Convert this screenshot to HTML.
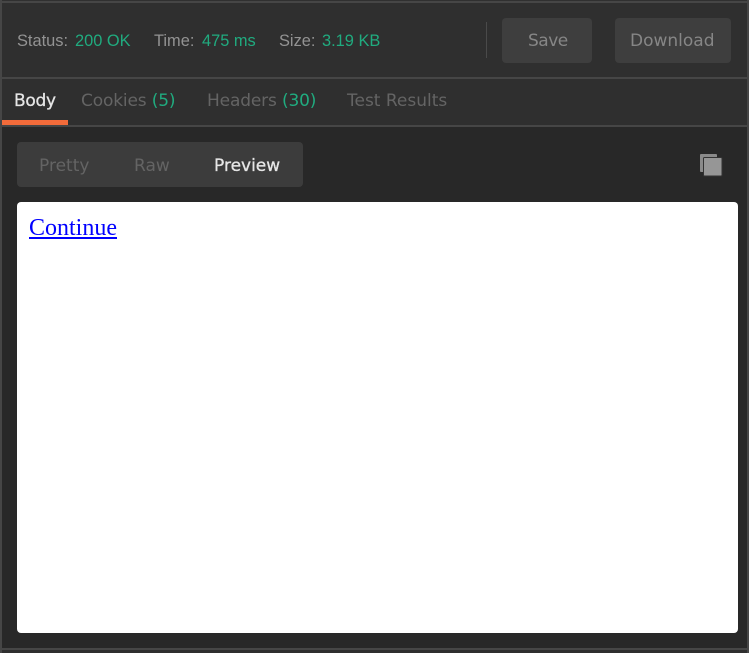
<!DOCTYPE html>
<html>
<head>
<meta charset="utf-8">
<style>
html,body{margin:0;padding:0;width:749px;height:653px;overflow:hidden;background:#282828}
.a{position:absolute;white-space:nowrap}
.s{font:16.4px/20px "Liberation Sans",Arial,sans-serif;top:31px;color:#939393}
.g{color:#20ab7f}
.o{font-family:"DejaVu Sans",sans-serif;font-size:17px;line-height:22px}
.b{-webkit-text-stroke:.3px #e6e6e6}
</style>
</head>
<body>
<div class="a" style="left:0;top:0;width:749px;height:653px;background:#282828;overflow:hidden">
  <div class="a" style="left:0;top:0;width:749px;height:1px;background:#303030"></div>
  <div class="a" style="left:0;top:1px;width:749px;height:2px;background:#464646"></div>
  <div class="a" style="left:0;top:3px;width:749px;height:74px;background:#2f2f2f"></div>
  <div class="a" style="left:0;top:77px;width:749px;height:2px;background:#464646"></div>
  <div class="a" style="left:0;top:79px;width:749px;height:46px;background:#2f2f2f"></div>
  <div class="a" style="left:0;top:125px;width:749px;height:2px;background:#464646"></div>
  <div class="a" style="left:0;top:648px;width:749px;height:2px;background:#464646"></div>
  <div class="a" style="left:0;top:650px;width:749px;height:3px;background:#2f2f2f"></div>
  <div class="a" style="left:0;top:0;width:2px;height:653px;background:#464646"></div>
  <div class="a" style="left:747px;top:0;width:2px;height:653px;background:#464646"></div>

  <div class="a s" style="left:17px">Status:</div>
  <div class="a s g" style="left:75px">200 OK</div>
  <div class="a s" style="left:154px">Time:</div>
  <div class="a s g" style="left:202px">475 ms</div>
  <div class="a s" style="left:279px">Size:</div>
  <div class="a s g" style="left:322px">3.19 KB</div>

  <div class="a" style="left:486px;top:22px;width:1px;height:36px;background:#4a4a4a"></div>
  <div class="a" style="left:502px;top:18px;width:90px;height:45px;border-radius:4px;background:#3e3e3e"></div>
  <div class="a o" style="left:528px;top:30px;color:#868686;letter-spacing:-.5px">Save</div>
  <div class="a" style="left:615px;top:18px;width:116px;height:45px;border-radius:4px;background:#3e3e3e"></div>
  <div class="a o" style="left:630px;top:30px;color:#868686">Download</div>

  <div class="a o b" style="left:14px;top:90px;color:#e6e6e6;letter-spacing:-.3px">Body</div>
  <div class="a" style="left:2px;top:120px;width:66px;height:5px;background:#f26b3a"></div>
  <div class="a o" style="left:81px;top:90px;color:#646464;letter-spacing:-.15px">Cookies <span class="g">(5)</span></div>
  <div class="a o" style="left:207px;top:90px;color:#646464;letter-spacing:-.15px">Headers <span class="g">(30)</span></div>
  <div class="a o" style="left:347px;top:90px;color:#646464">Test Results</div>

  <div class="a" style="left:17px;top:142px;width:286px;height:45px;border-radius:4px;background:#3c3c3c"></div>
  <div class="a o" style="left:39px;top:155px;color:#646464">Pretty</div>
  <div class="a o" style="left:134px;top:155px;color:#646464">Raw</div>
  <div class="a o b" style="left:214px;top:155px;color:#e6e6e6">Preview</div>

  <svg class="a" style="left:700px;top:154px" width="23" height="23" viewBox="0 0 23 23">
    <rect x="0" y="0" width="17" height="18" rx="1" fill="#8a8a8a"/>
    <rect x="3.5" y="3.5" width="18.5" height="18.5" rx="1" fill="#969696" stroke="#333333" stroke-width="1"/>
  </svg>

  <div class="a" style="left:17px;top:202px;width:721px;height:431px;border-radius:4px;background:#fff"></div>
  <a class="a" style="left:29px;top:213px;font:24px/30px 'Liberation Serif','Times New Roman',serif;color:#0000ff;text-decoration:underline">Continue</a>
</div>
</body>
</html>
